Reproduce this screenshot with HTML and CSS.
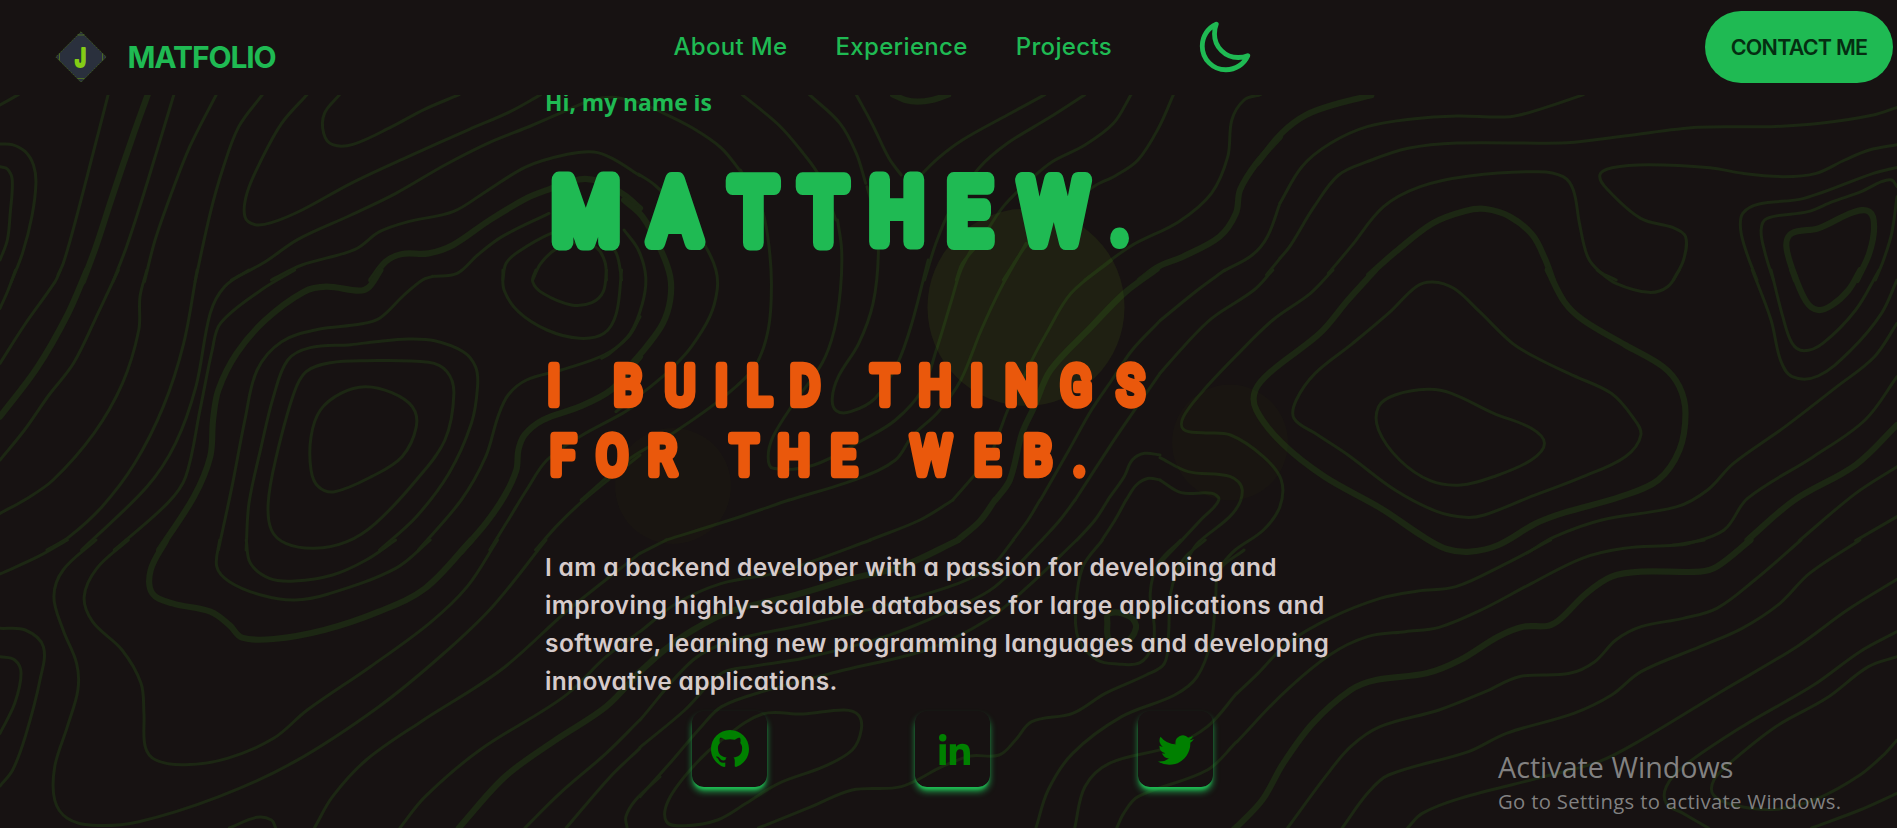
FILE: index.html
```html
<!DOCTYPE html>
<html lang="en">
<head>
<meta charset="utf-8">
<title>Matfolio</title>
<link rel="stylesheet" href="styles.css">
</head>
<body>
<div class="page">
  <svg class="backdrop" viewBox="0 0 1897 828" aria-hidden="true">
    <g id="contours"></g>
    <circle class="orb orb-large" cx="1026" cy="307.3" r="98.5"/>
    <circle class="orb orb-small" cx="1230" cy="442.5" r="58"/>
    <circle class="orb orb-small" cx="673" cy="486" r="58"/>
  </svg>

  <header class="nav">
    <a class="brand">
      <svg class="brand-mark" viewBox="0 0 52 52">
        <path class="brand-diamond" d="M26 .8 51.2 26 26 51.2.8 26z"/>
        <path class="brand-trim" d="M22.5 4h7M22.5 47.5h7M4.5 22.5v7M47.5 22.5v7"/>
        <text class="brand-letter" x="34" y="35.6" transform="scale(.75 1)">J</text>
      </svg>
      <span class="brand-name">MATFOLIO</span>
    </a>
    <nav class="links">
      <a>About Me</a>
      <a>Experience</a>
      <a>Projects</a>
    </nav>
    <svg class="moon" viewBox="0 0 512 512"><path d="M160 136c0-30.62 4.51-61.61 16-88C99.57 81.27 48 159.32 48 248c0 119.29 96.71 216 216 216 88.68 0 166.73-51.57 200-128-26.39 11.49-57.38 16-88 16-119.29 0-216-96.71-216-216z"/></svg>
    <a class="contact"><span>CONTACT ME</span></a>
  </header>

  <main class="hero">
    <p class="hello">Hi, my name is</p>
    <svg class="title" viewBox="0 0 640 330">
      <g class="name" transform="scale(.86 1)">
        <text y="82" x="47.4 151 242.2 323.500 409.1 493 591"><tspan class="wide">M</tspan>ATTHEW</text>
        <text class="dot" y="82" x="668.6">.</text>
      </g>
      <g class="tagline" transform="scale(.86 1)">
        <text y="244" x="10.5 50 96.5 157 205.1 248.8 302.3 340 395.3 453.5 502 554.1 617.8 681">I BUILD THINGS</text>
        <text y="314" x="20.8 78.1 136 180 231.4 289.4 347.3 400 448.8 514.3 572.8 621.4">FOR THE WEB.</text>
      </g>
    </svg>
    <p class="bio"><span class="b1">I am a backend developer with a passion for developing and</span><br><span class="b2">improving highly-scalable databases for large applications and</span><br><span class="b3">software, learning new programming languages and developing</span><br><span class="b4">innovative applications.</span></p>
    <div class="social">
      <a class="tile"><svg class="ico-gh" viewBox="0 0 16 16"><path d="M8 0C3.58 0 0 3.58 0 8c0 3.54 2.29 6.53 5.47 7.59.4.07.55-.17.55-.38 0-.19-.01-.82-.01-1.49-2.01.37-2.53-.49-2.69-.94-.09-.23-.48-.94-.82-1.13-.28-.15-.68-.52-.01-.53.63-.01 1.08.58 1.23.82.72 1.21 1.87.87 2.33.66.07-.52.28-.87.51-1.07-1.78-.2-3.64-.89-3.64-3.95 0-.87.31-1.59.82-2.15-.08-.2-.36-1.02.08-2.12 0 0 .67-.21 2.2.82.64-.18 1.32-.27 2-.27s1.36.09 2 .27c1.53-1.04 2.2-.82 2.2-.82.44 1.1.16 1.92.08 2.12.51.56.82 1.27.82 2.15 0 3.07-1.87 3.75-3.65 3.95.29.25.54.73.54 1.48 0 1.07-.01 1.93-.01 2.2 0 .21.15.46.55.38A8.01 8.01 0 0 0 16 8c0-4.42-3.58-8-8-8z"/></svg></a>
      <a class="tile"><svg class="ico-in" viewBox="0 0 31 31"><circle cx="3.7" cy="3.7" r="3.7"/><path d="M.5 10.2h6.4V31H.5zM10.8 10.2H17V13c1-1.7 3.3-3.3 6.3-3.3 6.3 0 7.7 4.2 7.7 9.6V31h-6.4V20.7c0-2.4 0-5.5-3.4-5.5s-4 2.6-4 5.4V31h-6.4z"/></svg></a>
      <a class="tile"><svg class="ico-tw" viewBox="0 0 16 16"><path d="M5.026 15c6.038 0 9.341-5.003 9.341-9.334 0-.14 0-.282-.006-.422A6.685 6.685 0 0 0 16 3.542a6.658 6.658 0 0 1-1.889.518 3.301 3.301 0 0 0 1.447-1.817 6.533 6.533 0 0 1-2.087.793A3.286 3.286 0 0 0 7.875 6.03a9.325 9.325 0 0 1-6.767-3.429 3.289 3.289 0 0 0 1.018 4.382A3.323 3.323 0 0 1 .64 6.575v.045a3.288 3.288 0 0 0 2.632 3.218 3.203 3.203 0 0 1-.865.115 3.23 3.23 0 0 1-.614-.057 3.283 3.283 0 0 0 3.067 2.277A6.588 6.588 0 0 1 .78 13.58a6.32 6.32 0 0 1-.78-.045A9.344 9.344 0 0 0 5.026 15z"/></svg></a>
    </div>
  </main>

  <aside class="activate">
    <p class="activate-title">Activate Windows</p>
    <p class="activate-text">Go to Settings to activate Windows.</p>
  </aside>
</div>
<script src="contours.js"></script>
</body>
</html>
```

FILE: styles.css
```css
* { box-sizing: border-box; }
body {
  margin: 0;
  background: #171212;
  font-family: Inter, "Open Sans", sans-serif;
  font-feature-settings: "cv11";
  overflow: hidden;
}
p { margin: 0; }
.page {
  position: relative;
  height: 828px;
  overflow: hidden;
}
.backdrop {
  position: absolute;
  inset: 0;
  width: 1897px;
  height: 828px;
}
.contour {
  fill: none;
  stroke: #1c2713;
  stroke-width: 3;
  stroke-linecap: round;
  stroke-linejoin: round;
}
.contour.index { stroke-width: 6.2; }
.orb-large { fill: rgba(132, 204, 22, .08); }
.orb-small { fill: rgba(132, 150, 10, .025); }

.nav {
  position: relative;
  z-index: 2;
  height: 95px;
  display: grid;
  grid-template-columns: 673.5px 526.5px 505px 1fr;
  align-items: start;
  background: #171212;
  color: #1fba53;
}
.brand { display: flex; align-items: center; gap: 21px; padding: 31px 0 0 54.5px; }
.brand-mark { width: 52px; height: 52px; display: block; }
.brand-diamond { fill: #2a303d; stroke: #3c5423; stroke-width: 1; stroke-dasharray: 2 1; }
.brand-trim { stroke: #4a6a26; stroke-width: 1; fill: none; }
.brand-letter {
  font: 700 26px Inter, sans-serif;
  text-anchor: middle;
  fill: #84cc16;
  stroke: #84cc16;
  stroke-width: 2;
  stroke-linejoin: round;
}
.brand-name { font-size: 30px; font-weight: 650; letter-spacing: -1.1px; line-height: 52px; white-space: nowrap; }
.links { display: flex; gap: 48px; padding-top: 29px; font-size: 24px; line-height: 36px; font-weight: 450; letter-spacing: .33px; white-space: nowrap; }
.moon { width: 56px; height: 56px; margin: 19px 0 0 -3px; fill: none; stroke: #1fba53; stroke-width: 44; stroke-linejoin: round; }
.contact {
  display: flex;
  align-items: center;
  justify-content: center;
  width: 188px;
  height: 72px;
  margin-top: 11px;
  border-radius: 36px;
  background: #1fba53;
  color: #052e12;
  font-size: 21.5px;
  font-weight: 600;
  letter-spacing: -.75px;
  white-space: nowrap;
}

.hero { position: relative; width: 800px; margin-left: 545px; }
.hello {
  font: 700 22.8px/30px "Open Sans", sans-serif;
  color: #1fba53;
  margin-top: -7px;
}
.title {
  display: block;
  width: 640px;
  height: 330px;
  margin-top: 42px;
  overflow: visible;
  font-family: Roboto, sans-serif;
  font-weight: 400;
  text-anchor: middle;
  stroke-linejoin: round;
}
.name { fill: #1fba53; stroke: #1fba53; font-size: 88px; stroke-width: 16px; }
.name .wide { stroke-width: 17px; }
.name .dot { stroke-width: 12px; }
.tagline { fill: #ea580c; stroke: #ea580c; font-size: 53px; stroke-width: 8.5px; }
.bio {
  margin-top: 58px;
  font-size: 24.5px;
  font-weight: 560;
  line-height: 38px;
  color: #d6cbcb;
  white-space: nowrap;
}
.b1 { letter-spacing: .33px; }
.b2 { letter-spacing: .44px; }
.b3 { letter-spacing: .42px; }
.b4 { letter-spacing: .35px; }
.social { display: flex; gap: 148px; padding: 11px 0 0 147px; }
.tile {
  display: flex;
  align-items: center;
  justify-content: center;
  width: 75px;
  height: 76px;
  border-radius: 12px;
  box-shadow: 0 5px 7px -1px #1fba53, 0 4px 3px -2px #1fba53;
  fill: #008000;
}
.ico-gh { width: 38px; height: 38px; }
.ico-in { width: 31px; height: 31px; margin-left: 3px; }
.ico-tw { width: 36px; height: 36px; }

.activate {
  position: absolute;
  left: 1498px;
  top: 747px;
  color: rgba(150, 150, 150, .85);
  font-family: "Open Sans", sans-serif;
  font-weight: 400;
  white-space: nowrap;
}
.activate-title { font-size: 28.7px; line-height: 40px; }
.activate-text { font-size: 20.3px; line-height: 28px; letter-spacing: .32px; }
```

FILE: contours.js
```js
// Contour map. Each sheet has an origin and a scale; each line is a list of
// x,y knots in sheet units. "T" marks a bold index line, a trailing "z" closes it.
const sheets = [
  { x: 0, y: 0, sx: 2.45, sy: 3, lines: `
0,315 45,284
0,432 30,434 62,455 82,495 88,550 78,650 55,760 28,845
0,500 18,507 30,540 25,640 18,720 0,780
265,284 228,460 180,685 155,790 142,825
T 362,284 325,410 275,590 235,740 203,845
426,284 390,430 345,610 310,740 277,845
530,284 465,440 420,580 380,720 354,845
643,284 585,380 545,510 515,640 478,845
752,284 690,370 640,480 605,580 600,650 625,674 665,668 740,630 860,550 1000,470 1150,388 1250,335 1325,284
832,284 795,340 793,400 815,434 865,433 960,380 1040,328 1125,284
567,840 650,785 730,718 860,645 970,580 1090,495 1200,427 1300,378 1400,325 1450,300 1500,292 1568,308
665,840 740,795 870,748 930,695 1000,665 1110,635 1190,575 1290,500 1390,463 1455,456 1500,475 1568,527
T 910,840 945,785 985,762 1050,760 1110,735 1200,660 1290,595 1345,568 1420,538 1470,545 1530,585 1568,625
1060,829 1120,820 1170,765 1230,710 1345,640
1232,840 1240,790 1270,755 1350,700 1410,683 1470,695 1510,760 1523,840
1305,840 1325,790 1365,745 1415,728 1460,742 1482,785 1486,840` },
  { x: 640, y: 0, sx: 2.45, sy: 3, lines: `
0,308 55,338 130,385 200,445 250,520
250,284 340,375 400,460 440,530 480,660
415,284 490,370 530,460 553,550
530,284 570,375 610,475 640,525
T 620,284 650,300 680,305 715,300 755,284
992,284 900,345 790,420 730,475 680,535
1090,284 1000,355 900,430 830,505 760,630 725,730 697,840
1203,284 1160,370 1090,435 1010,485 960,535 890,620 830,730 790,790 775,840
1307,284 1270,385 1220,480 1165,527 1115,557 1020,640 950,730 890,840
1520,284 1480,300 1450,360 1440,470 1400,580 1320,665 1200,740 1090,840
T 1568,410 1510,490 1470,570 1460,640 1420,710 1330,770 1270,800 1225,840
1568,610 1537,710 1500,765 1432,812
1568,775 1535,825` },
  { x: 1257, y: 0, sx: 2.45, sy: 3, lines: `
0,287 8,284
T 0,490 60,400 120,345 200,310 280,286
56,610 110,500 180,430 270,380 380,357 490,348 620,350 700,325 800,284
56,775 80,740 140,620 200,525 270,485 370,445 490,429 760,428 900,408 1080,382 1260,380 1380,370 1510,345 1568,322
175,820 230,740 310,620 400,560 520,528 690,515 750,530 775,570 790,670 810,770 840,815 880,840
T 275,825 340,755 430,670 510,633 560,627 620,650 675,705 705,775 725,840
1568,434 1500,450 1440,480 1370,520 1290,530 1190,520 1110,503 960,494 870,503 840,525 860,570 940,655 1020,683 1050,710 1045,780 1020,840
1568,502 1510,520 1340,595 1230,612 1190,640 1185,690 1200,760 1225,840
1568,560 1555,540 1530,545 1480,575 1410,605 1350,635 1250,655 1235,690 1245,760 1265,840
1568,590 1555,700 1535,780 1515,840
T 1320,840 1297,740 1310,700 1375,685 1460,637 1500,635 1512,680 1500,760 1470,840` },
  { x: 0, y: 270, sx: 2.45, sy: 3, lines: `
38,0 20,60 0,115
148,0 135,35 60,165 0,280
T 213,0 165,135 90,295 0,440
290,0 240,130 180,280 120,375 60,480 0,570
360,0 343,80 340,180 300,340 230,490 130,630 60,690 0,730
483,0 450,220 400,410 330,580 250,710 170,800 115,840
610,0 550,50 515,130 480,350 430,520 360,650 200,840
722,0 640,60 540,160 520,240 490,420 455,620 410,700 280,840
T 932,0 905,50 880,62 800,50 745,65 650,150 580,250 535,360 522,450 515,560 475,680 390,840
1060,19 1035,30 990,75 930,145 880,163 780,178 690,215 630,300 600,450 570,640 535,840
603,840 610,700 640,530 670,380 705,270 760,233 860,224 920,215 1000,207 1065,212 1135,245 1165,290 1170,350 1155,460 1100,610 1020,740 930,840
890,272 1050,277 1095,305 1112,370 1090,510 1020,630 920,760 850,815 770,835 700,820 665,780 657,700 675,570 720,370 750,305 810,278 z
895,350 960,368 1010,410 1020,470 985,560 910,620 820,665 780,650 762,600 762,500 785,420 835,370 z
1568,140 1540,200 1480,255 1375,300 1290,330 1245,375 1220,440 1190,560 1130,690 1025,840
1232,0 1235,60 1270,125 1340,180 1420,205 1480,190 1510,130 1523,0
1313,0 1305,35 1330,70 1400,105 1450,98 1478,65 1486,0
1568,555 1440,680 1370,760 1312,840
1568,395 1525,430 1420,500 1340,570 1290,660 1250,740 1200,840
T 1568,260 1550,285 1497,360 1420,410 1330,450 1285,495 1270,540 1265,600 1235,680 1190,760 1130,845` },
  { x: 520, y: 150, sx: 2.45, sy: 3, lines: `
540,60 590,170 607,260 616,400 608,540 575,650 500,740 380,845 270,925 150,1050
290,72 330,105 400,190 455,290 480,360 483,420 465,500 420,590 380,645 320,710 235,785
T 255,150 300,200 345,300 368,380 368,450 350,520 310,590 275,640 240,690
255,240 290,300 308,380 300,460 270,550 220,610 200,625
778,210 788,300 785,420 770,540 740,640 665,770 620,860 608,920 620,955 720,945 840,870 920,810 985,720 1020,600 1055,460 1080,360 1105,300
850,110 870,200 878,310 865,460 830,580 780,680 765,745 775,782 810,785 870,745 925,640 960,520 1000,330
1240,280 1180,410 1130,540 1080,690 1025,785 960,860 920,930 830,985 660,1050
1450,330 1350,430 1290,550 1250,640 1195,780 1175,845 1150,920 1110,980 1060,1050
T 1560,357 1480,430 1400,530 1300,660 1260,770 1230,850 1200,990 1165,1050
1568,512 1500,600 1450,690 1400,780 1345,900 1275,1050
1568,670 1500,790 1450,880 1360,1050
1568,915 1530,910 1500,930 1480,980 1440,1050
1568,990 1540,985 1510,1005 1485,1050` },
  { x: 640, y: 500, sx: 1, sy: 1, lines: `
149,0 90,20 26,40
313,0 280,20 230,40
T 355,0 340,21 318,40
400,0 388,20 373,40
435,0 420,20 402,40
468,0 455,20 437,40
486,0 475,20 462,40` },
  { x: 1160, y: 270, sx: 2.1275, sy: 3, lines: `
138,0 80,60 0,152
240,0 200,60 110,145 50,230 0,310
368,0 320,70 240,150 160,260 90,365 50,440 50,478 90,488 150,495 220,560 258,630 255,710 220,780 160,840 130,885
T 458,0 400,90 340,190 240,300 203,360 205,420 260,520 350,620 470,715 560,800 610,837 660,845 720,825 800,760 860,728 980,680 1060,630 1105,540 1118,430 1105,350 1070,290 990,225 900,150 860,95 825,0
580,36 625,55 680,125 750,220 810,270 880,317 960,370 1005,440 1023,495 990,560 900,620 780,685 690,735 650,742 590,725 500,660 400,555 330,490 285,445 290,390 330,310 410,220 490,125 545,50 z
570,358 620,370 710,430 790,475 818,520 790,570 710,620 640,645 575,632 510,570 465,480 465,410 500,375 z
930,0 970,40 1040,67 1080,50 1105,0
1260,0 1300,150 1320,270 1345,320 1400,318 1470,240 1535,130 1568,30
1300,0 1325,140 1345,220 1370,242 1410,220 1480,120 1530,0
T 1345,0 1375,95 1400,120 1430,105 1465,60 1490,0
1568,160 1520,260 1440,350 1330,470 1220,580 1165,660 1100,710 940,750 840,800 780,850
1568,320 1500,450 1390,560 1250,685 1200,780 1120,822 1090,826
T 1568,465 1480,585 1350,690 1250,810
1568,590 1480,670 1360,812
1568,740 1480,812
0,563 60,605 150,620 175,660 155,730 80,820 55,875
0,630 45,668 110,670 125,690 90,745 0,880` },
  { x: 0, y: 540, sx: 2.3758, sy: 3, lines: `
160,0 90,50 0,102
228,0 150,90 128,170 150,270 182,370 185,450 160,560 130,680 130,780 160,835 220,856 330,845 520,770 700,665 900,500 1050,345 1170,200 1297,0
305,0 230,85 200,170 220,245 290,330 335,430 342,520 345,620 370,660 440,674 540,655 650,595 730,510 880,380 1020,250 1110,140 1182,0
T 395,0 358,90 362,160 410,190 500,215 545,255 575,293 650,297 770,270 900,215 1010,145 1120,0
522,0 515,80 545,125 620,165 700,180 780,162 940,85 1022,0
585,0 595,70 640,115 700,123 790,105 870,60 940,0
0,265 60,270 103,320 95,420 60,590 30,690 0,738
0,350 35,360 50,400 35,490 0,580
545,864 610,832 645,840 655,864
747,864 790,770 870,660 1000,545 1190,390 1350,210 1520,40
950,864 1010,770 1140,630 1340,470 1440,350 1520,275
T 1090,864 1200,710 1320,600 1440,500 1520,395
1247,864 1330,760 1440,640 1520,540
1345,864 1450,710 1520,625
1568,710 1510,780 1487,830 1490,864` },
  { x: 640, y: 540, sx: 2.45, sy: 3, lines: `
0,40 65,0
0,275 90,190 200,130 330,100 420,65 565,0
T 0,395 60,330 130,270 220,215 380,165 520,115 640,80 780,0
0,540 130,360 230,300 400,255 620,190 780,130 860,80 915,0
0,622 110,510 200,400 270,380 400,355 600,290 780,200 870,140 985,0
0,770 80,660 150,560 200,500 300,455 500,390 700,330 850,240 950,140 1070,0
1133,0 1085,80 1068,200 1075,300 1120,360 1170,372 1225,368 1255,320 1260,260 1250,160 1270,70 1325,0
T 1150,220 1200,230 1215,265 1185,310 1150,300 1145,250 z
1385,0 1330,60 1300,160 1295,280 1285,370 1240,405 1140,460 1060,520 960,545 920,600 880,645 810,648 740,680 640,740 520,750 420,800 290,864
1480,30 1420,90 1410,180 1400,300 1365,410 1310,465 1180,530 1060,640 1000,750 970,864
1462,460 1390,560 1300,620 1150,670 1090,740 1065,864
1462,605 1390,690 1220,770 1185,820 1168,864
T 1462,860 1445,880
300,522 400,522 500,510 535,525 542,570 520,630 450,680 340,730 260,790 190,840 110,857 65,845 70,780 130,680 200,600 z` },
  { x: 1237, y: 540, sx: 2.3758, sy: 3, lines: `
745,0 640,70 520,140 430,153 340,175 220,235 120,310 50,400 0,460
1110,0 1040,15 920,25 820,55 700,130 580,210 480,262 400,275 310,290 220,345 110,460 0,605
T 1220,0 1140,80 1100,95 960,95 890,110 830,160 770,235 740,257 680,260 620,290 530,360 450,400 330,420 270,450 180,550 110,670 60,780 0,860
1340,0 1230,120 1140,205 1060,235 960,260 900,300 850,365 790,400 670,410 590,455 480,510 340,560 270,620 210,710 120,864
1480,0 1360,100 1290,190 1200,265 1100,320 960,395 890,465 800,520 640,580 550,635 360,705 310,760 250,864
1568,118 1450,210 1330,320 1150,455 960,600 860,665 730,710 530,775 440,820 405,864
1568,275 1480,335 1370,435 1200,560 1060,680 1020,740 1020,790 1060,820 1120,864
1568,350 1500,380 1400,475 1280,560 1170,670 1133,720 1132,765 1180,795 1280,808 1380,775 1480,705 1540,640 1568,600
1568,760 1480,810 1365,864` }
];

// Splines through the knots, written as cubic segments.
function spline(p, closed) {
  const n = p.length;
  const at = i => closed ? p[(i + n) % n] : p[Math.max(0, Math.min(n - 1, i))];
  let d = `M${p[0]}`;
  for (let i = 0; i < (closed ? n : n - 1); i++) {
    const [a, b, c, e] = [at(i - 1), at(i), at(i + 1), at(i + 2)];
    const l = Math.hypot(c[0] - b[0], c[1] - b[1]);
    const t1 = Math.hypot(c[0] - a[0], c[1] - a[1]) || 1;
    const t2 = Math.hypot(e[0] - b[0], e[1] - b[1]) || 1;
    const k = l * 0.34;
    d += `C${b[0] + (c[0] - a[0]) / t1 * k} ${b[1] + (c[1] - a[1]) / t1 * k} ` +
         `${c[0] - (e[0] - b[0]) / t2 * k} ${c[1] - (e[1] - b[1]) / t2 * k} ${c[0]} ${c[1]}`;
  }
  return d;
}

const layer = document.getElementById("contours");
for (const s of sheets) {
  for (const line of s.lines.trim().split("\n")) {
    const words = line.split(" ");
    const bold = words[0] === "T";
    const closed = words[words.length - 1] === "z";
    const knots = words.filter(w => w.includes(",")).map(w => {
      const [x, y] = w.split(",").map(Number);
      return [s.x + x / s.sx, s.y + y / s.sy];
    });
    const path = document.createElementNS("http://www.w3.org/2000/svg", "path");
    path.setAttribute("class", bold ? "contour index" : "contour");
    path.setAttribute("d", spline(knots, closed));
    layer.appendChild(path);
  }
}
```
